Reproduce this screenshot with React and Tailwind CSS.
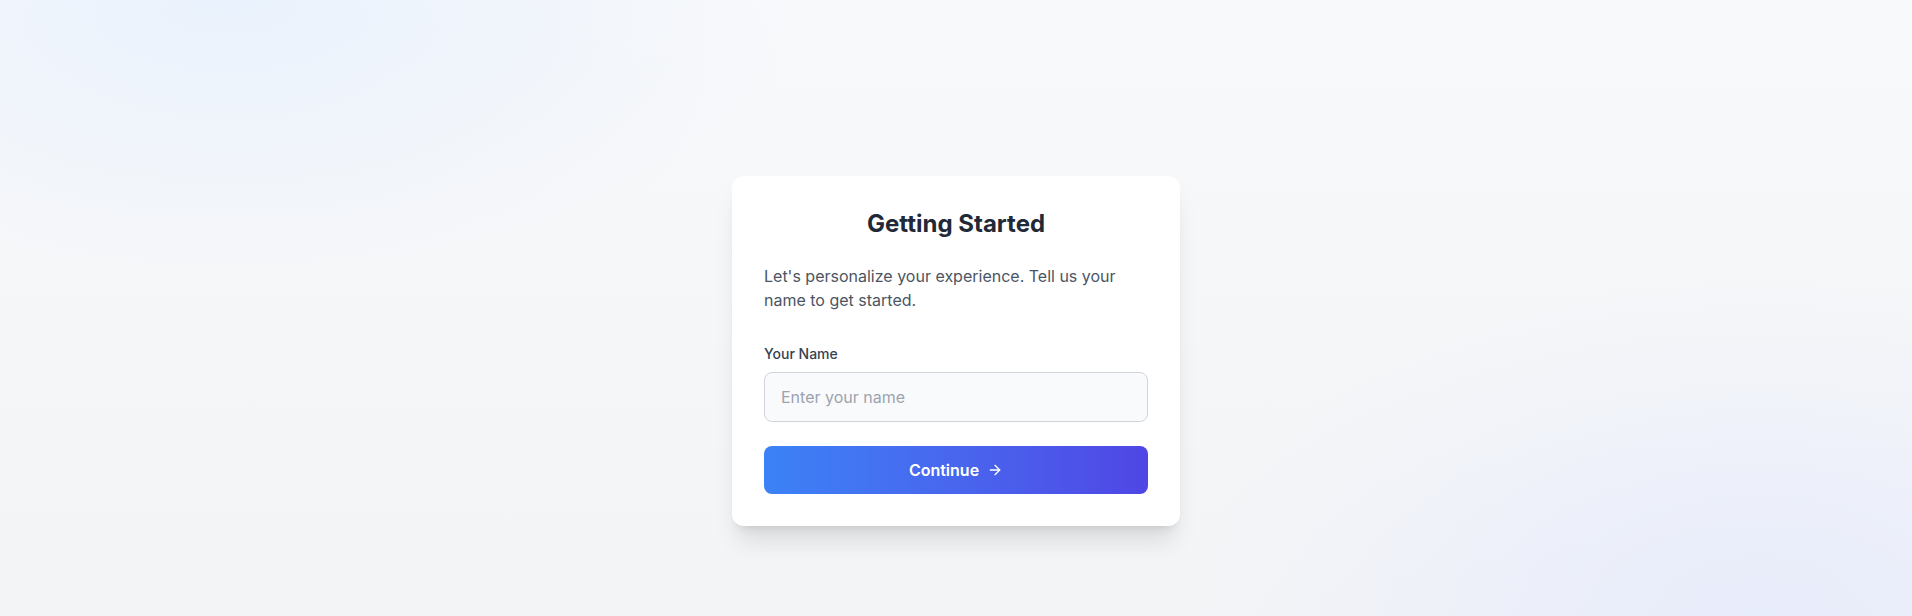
import React from "react";
import { ArrowRight } from "lucide-react";

export default function App() {
  return (
    <div
      className="min-h-screen w-full flex justify-center items-start pt-[176px] pb-[90px] bg-[image:radial-gradient(ellipse_30%_45%_at_12%_0%,rgba(219,234,254,0.5),transparent),radial-gradient(ellipse_30%_55%_at_92%_100%,rgba(224,231,255,0.6),transparent),linear-gradient(to_bottom,#f8f9fb,#f3f4f6)]"
      style={{ fontFamily: "Inter, 'Noto Sans', sans-serif" }}
    >
      <div className="w-[448px] bg-white rounded-xl shadow-xl p-8">
        <h1 className="text-2xl leading-8 font-bold text-[#1f2937] text-center mb-6">
          Getting Started
        </h1>
        <p className="text-base leading-6 text-[#4b5563] mb-8">
          Let's personalize your experience. Tell us your name to get started.
        </p>
        <label className="block text-sm leading-5 font-medium text-[#374151] mb-2">
          Your Name
        </label>
        <input
          type="text"
          placeholder="Enter your name"
          className="w-full px-4 py-3 text-base leading-6 bg-[#f9fafb] border border-[#d1d5db] rounded-lg text-[#1f2937] placeholder:text-[#9ca3af] outline-none"
        />
        <button className="mt-6 w-full py-3 rounded-lg bg-gradient-to-r from-[#3b82f6] to-[#4f46e5] text-white text-base leading-6 font-semibold flex items-center justify-center gap-2">
          Continue
          <ArrowRight size={16} strokeWidth={2} />
        </button>
      </div>
    </div>
  );
}
